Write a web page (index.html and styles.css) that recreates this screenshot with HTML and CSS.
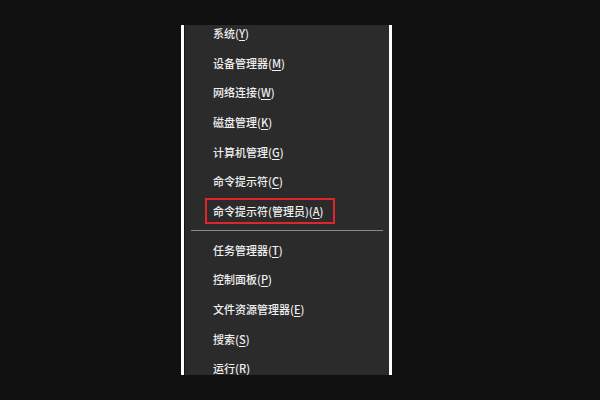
FILE: index.html
```html
<!DOCTYPE html>
<html lang="zh-CN">
<head>
  <meta charset="UTF-8" />
  <title>快速链接菜单</title>
  <link rel="stylesheet" href="styles.css">
</head>
<body>
  <div class="menu">
    <ul class="group first">
      <li><span class="label">系统(<u>Y</u>)</span></li>
      <li><span class="label">设备管理器(<u>M</u>)</span></li>
      <li><span class="label">网络连接(<u>W</u>)</span></li>
      <li><span class="label">磁盘管理(<u>K</u>)</span></li>
      <li><span class="label">计算机管理(<u>G</u>)</span></li>
      <li><span class="label">命令提示符(<u>C</u>)</span></li>
      <li><span class="label marked">命令提示符(管理员)(<u>A</u>)</span></li>
    </ul>
    <div class="sep"></div>
    <ul class="group">
      <li><span class="label">任务管理器(<u>T</u>)</span></li>
      <li><span class="label">控制面板(<u>P</u>)</span></li>
      <li><span class="label">文件资源管理器(<u>E</u>)</span></li>
      <li><span class="label">搜索(<u>S</u>)</span></li>
      <li><span class="label">运行(<u>R</u>)</span></li>
    </ul>
  </div>
</body>
</html>
```

FILE: styles.css
```css
body { margin: 0; padding-top: 25px; background: #101010; font-family: "Noto Sans CJK SC", "Noto Sans", sans-serif; }
.menu { margin-left: 181px; width: 205px; height: 350px; overflow: hidden; background: #2b2b2b; border-left: 3px solid #fff; border-right: 3px solid #fff; box-shadow: inset 1px 0 #161616; }
.group { list-style: none; margin: 0; padding: 0; }
.group.first { margin-top: -7px; }
.group li { height: 29.7px; display: flex; align-items: center; padding-left: 21px; }
.label { display: inline-block; height: 22px; line-height: 22px; padding: 0 9px 0 6px; border: 2px solid transparent; font-size: 11px; font-weight: 500; color: #f0f0f0; white-space: nowrap; }
.label u { text-underline-offset: 2px; }
.label.marked { border-color: #e0262b; }
.sep { height: 1px; margin: 4px 6px 4px 7px; background: #8a8a8a; }
```
